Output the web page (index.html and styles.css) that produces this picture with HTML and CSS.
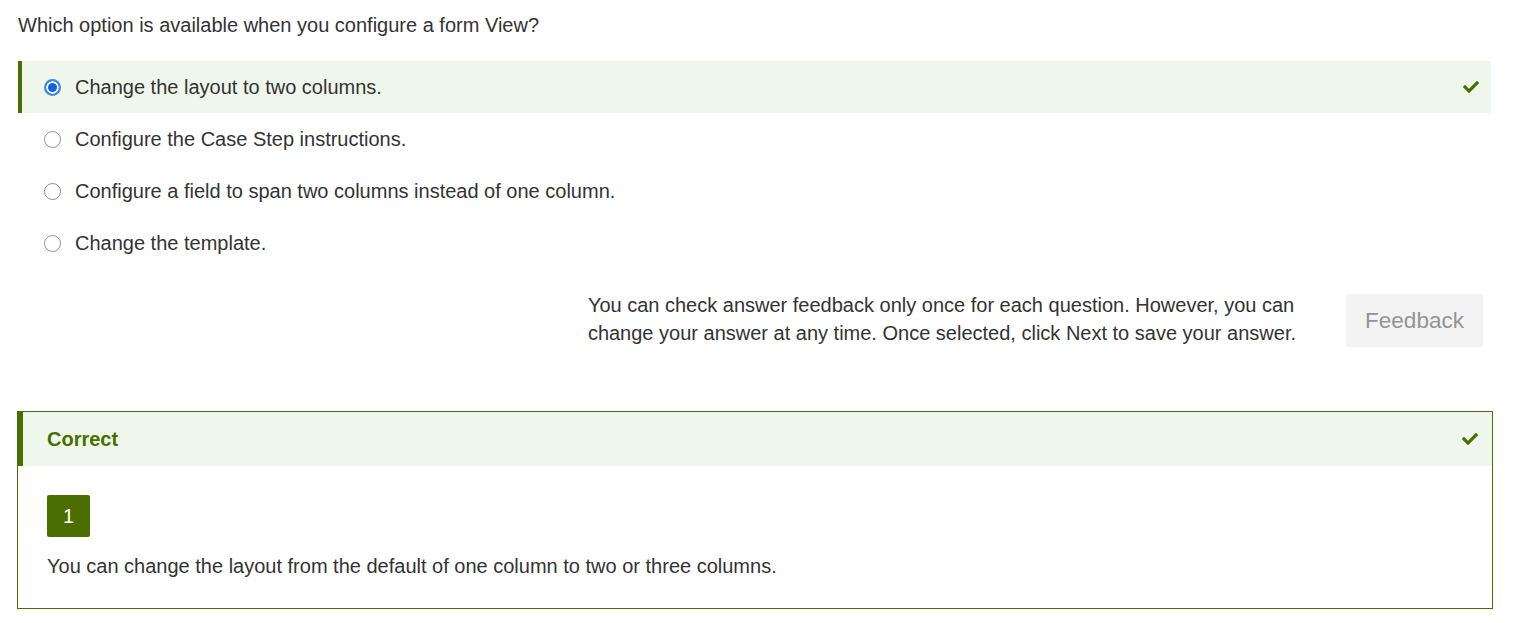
FILE: index.html
```html
<!DOCTYPE html>
<html lang="en">
<head>
<meta charset="utf-8">
<title>Question</title>
<link rel="stylesheet" href="styles.css">
</head>
<body>
<div class="page">
  <p class="question">Which option is available when you configure a form View?</p>
  <ul class="options">
    <li class="option selected">
      <label class="opt-label"><input type="radio" name="q" class="radio" checked><span>Change the layout to two columns.</span></label>
      <svg class="check" viewBox="0 0 512 512" width="16" height="16"><path d="M173.9 439.4l-166.4-166.4c-10-10-10-26.2 0-36.2l36.2-36.2c10-10 26.2-10 36.2 0L192 312.7 432.1 72.6c10-10 26.2-10 36.2 0l36.2 36.2c10 10 10 26.2 0 36.2l-294.4 294.4c-10 10-26.2 10-36.2 0z"/></svg>
    </li>
    <li class="option">
      <label class="opt-label"><input type="radio" name="q" class="radio"><span>Configure the Case Step instructions.</span></label>
    </li>
    <li class="option">
      <label class="opt-label"><input type="radio" name="q" class="radio"><span>Configure a field to span two columns instead of one column.</span></label>
    </li>
    <li class="option">
      <label class="opt-label"><input type="radio" name="q" class="radio"><span>Change the template.</span></label>
    </li>
  </ul>
  <div class="feedback-row">
    <p class="feedback-note">You can check answer feedback only once for each question. However, you can<br>change your answer at any time. Once selected, click Next to save your answer.</p>
    <button class="feedback-btn" type="button">Feedback</button>
  </div>
  <section class="result">
    <header class="result-head">
      <h2 class="result-title">Correct</h2>
      <svg class="check" viewBox="0 0 512 512" width="16" height="16"><path d="M173.9 439.4l-166.4-166.4c-10-10-10-26.2 0-36.2l36.2-36.2c10-10 26.2-10 36.2 0L192 312.7 432.1 72.6c10-10 26.2-10 36.2 0l36.2 36.2c10 10 10 26.2 0 36.2l-294.4 294.4c-10 10-26.2 10-36.2 0z"/></svg>
    </header>
    <div class="result-body">
      <span class="badge">1</span>
      <p class="explain">You can change the layout from the default of one column to two or three columns.</p>
    </div>
  </section>
</div>
</body>
</html>
```
FILE: styles.css
```css
* { box-sizing: border-box; }
html, body { margin: 0; padding: 0; background: #fff; }
body {
  font-family: "Liberation Sans", Arial, sans-serif;
  font-size: 20px;
  color: #333;
}
.page {
  padding: 13px 22px 0 17px;
}
.question {
  margin: 0 0 24px 1px;
  line-height: 24px;
}
.options {
  list-style: none;
  margin: 0 2px 0 1px;
  padding: 0;
}
.option {
  height: 52px;
  display: flex;
  align-items: center;
  justify-content: space-between;
  padding: 0 12px 0 26px;
}
.option.selected {
  background: #eff7ec;
  border-left: 4px solid #4a6f00;
  padding-left: 22px;
}
.opt-label {
  display: flex;
  align-items: center;
  gap: 14px;
  line-height: 24px;
  cursor: pointer;
}
.radio {
  appearance: none;
  -webkit-appearance: none;
  margin: 0;
  width: 17px;
  height: 17px;
  border-radius: 50%;
  border: 1px solid #8f8f8f;
  background: #fff;
  flex: none;
}
.radio:checked {
  border: 2px solid #3d86ee;
  background: #0c64e4;
  box-shadow: inset 0 0 0 2px #fff;
}
.check {
  fill: #4a6f00;
  width: 16px;
  height: 16px;
  flex: none;
}
.feedback-row {
  display: flex;
  justify-content: flex-end;
  align-items: flex-start;
  gap: 50px;
  margin: 22px 10px 0 0;
}
.feedback-note {
  margin: 0;
  line-height: 28px;
  white-space: nowrap;
}
.feedback-btn {
  margin-top: 3px;
  width: 137px;
  height: 53px;
  border: none;
  border-radius: 2px;
  background: #f3f3f3;
  color: #939393;
  font-family: inherit;
  font-size: 22.5px;
  padding: 0;
}
.result {
  margin-top: 64px;
  border: 1px solid #4a6f00;
}
.result-head {
  height: 54px;
  background: #eff7ec;
  border-left: 5px solid #4a6f00;
  display: flex;
  align-items: center;
  justify-content: space-between;
  padding: 0 14px 0 24px;
}
.result-title {
  margin: 0;
  font-size: 20px;
  font-weight: bold;
  color: #4a6f00;
}
.result-body {
  padding: 29px 29px 30px;
}
.badge {
  display: flex;
  align-items: center;
  justify-content: center;
  width: 43px;
  height: 42px;
  background: #4a6f00;
  color: #fff;
  border-radius: 2px;
  font-size: 20px;
}
.explain {
  margin: 17px 0 0;
  line-height: 24px;
}
```
